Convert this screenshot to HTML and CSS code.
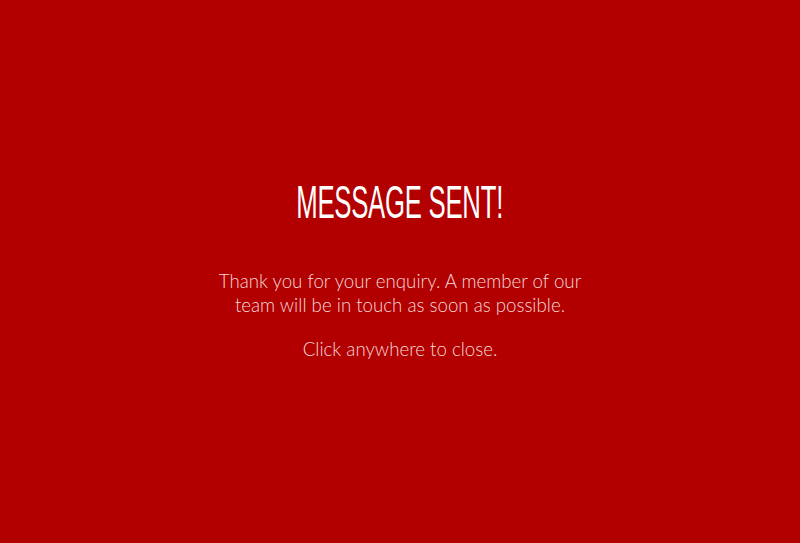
FILE: index.html
```html
<!DOCTYPE html>
<html lang="en">
<head>
<meta charset="utf-8">
<title>Message sent</title>
<link rel="stylesheet" href="styles.css">
</head>
<body>
<main class="overlay">
  <div class="box">
    <h1 class="title"><span class="title-text">MESSAGE SENT!</span></h1>
    <p class="msg">Thank you for your enquiry. A member of our<br>team will be in touch as soon as possible.</p>
    <p class="msg">Click anywhere to close.</p>
  </div>
</main>
</body>
</html>
```

FILE: styles.css
```css
html, body {
  margin: 0;
  padding: 0;
  height: 100%;
}
body {
  background: #b20000;
  color: #fff;
  font-family: "Lato", "Liberation Sans", sans-serif;
}
.overlay {
  height: 543px;
  display: flex;
  align-items: center;
  justify-content: center;
}
.box {
  text-align: center;
  margin-top: -3px;
}
.title {
  margin: 0 0 44px;
  font-family: "Liberation Sans", sans-serif;
  font-weight: 400;
  font-size: 46px;
  line-height: 46px;
  color: #fff;
}
.title-text {
  display: inline-block;
  transform: scaleX(0.56);
  letter-spacing: -0.5px;
}
.msg {
  margin: 0 0 20px;
  font-size: 18.7px;
  line-height: 24px;
  font-weight: 300;
  color: #f2d8d8;
}
.msg:last-child { margin-bottom: 0; }
```
